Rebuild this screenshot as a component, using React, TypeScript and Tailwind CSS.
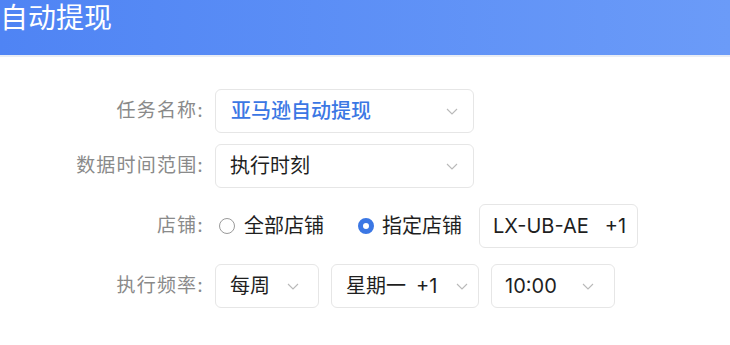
import React from "react";

const font = { fontFamily: '"Inter", "Noto Sans CJK SC", "Noto Sans", sans-serif' };

function Chevron() {
  return (
    <svg width="12" height="7" viewBox="0 0 12 7" fill="none">
      <polyline points="1,1 6,6 11,1" stroke="#b9b9b9" strokeWidth="1.1" />
    </svg>
  );
}

function Label({ children }: { children: React.ReactNode }) {
  return (
    <div className="w-[205px] shrink-0 text-right text-[19px] tracking-[1.2px] text-[#8a8a8a] pr-[1px]">
      {children}
    </div>
  );
}

export default function App() {
  return (
    <div className="w-[730px] h-[345px] bg-white overflow-hidden" style={font}>
      <div className="h-[55px] bg-gradient-to-r from-[#4f84f4] to-[#6b9bf8] flex items-start">
        <div className="text-white text-[28px] leading-[34px] pt-[1px]">自动提现</div>
      </div>
      <div className="h-[2px] bg-[#e9edf4]" />
      <div className="flex flex-col pt-[32px]">
        <div className="flex items-center h-[44px]">
          <Label>任务名称:</Label>
          <div className="ml-[10px] w-[259px] h-[44px] border border-[#e6e6e6] rounded-[6px] flex items-center justify-between pl-[15px] pr-[15px]">
            <span className="text-[20px] font-medium text-[#3b77e4]">亚马逊自动提现</span>
            <Chevron />
          </div>
        </div>
        <div className="flex items-center h-[44px] mt-[11px]">
          <Label>数据时间范围:</Label>
          <div className="ml-[10px] w-[259px] h-[44px] border border-[#e6e6e6] rounded-[6px] flex items-center justify-between pl-[14px] pr-[15px]">
            <span className="text-[20px] text-[#1f1f1f]">执行时刻</span>
            <Chevron />
          </div>
        </div>
        <div className="flex items-center h-[44px] mt-[16px]">
          <Label>店铺:</Label>
          <div className="ml-[14px] flex items-center">
            <div className="w-[16px] h-[16px] rounded-full border border-[#9a9a9a] bg-white" />
            <span className="ml-[9px] text-[20px] text-[#1f1f1f]">全部店铺</span>
          </div>
          <div className="ml-[34px] flex items-center">
            <div className="w-[16px] h-[16px] rounded-full border-[5px] border-[#3b77e4] bg-white" />
            <span className="ml-[8px] text-[20px] text-[#1f1f1f]">指定店铺</span>
          </div>
          <div className="ml-[17px] w-[159px] h-[44px] border border-[#e6e6e6] rounded-[6px] flex items-center pl-[13px] text-[20px] text-[#1f1f1f]">
            <span>LX-UB-AE</span>
            <span className="ml-[16px]">+1</span>
          </div>
        </div>
        <div className="flex items-center h-[44px] mt-[16px]">
          <Label>执行频率:</Label>
          <div className="ml-[10px] w-[104px] h-[44px] border border-[#e6e6e6] rounded-[6px] flex items-center justify-between pl-[14px] pr-[19px] text-[20px] text-[#1f1f1f]">
            <span>每周</span>
            <Chevron />
          </div>
          <div className="ml-[12px] w-[148px] h-[44px] border border-[#e6e6e6] rounded-[6px] flex items-center justify-between pl-[14px] pr-[10px] text-[20px] text-[#1f1f1f]">
            <span>
              星期一<span className="ml-[10px]">+1</span>
            </span>
            <Chevron />
          </div>
          <div className="ml-[12px] w-[124px] h-[44px] border border-[#e6e6e6] rounded-[6px] flex items-center justify-between pl-[13px] pr-[20px] text-[20px] text-[#1f1f1f]">
            <span>10:00</span>
            <Chevron />
          </div>
        </div>
      </div>
    </div>
  );
}
